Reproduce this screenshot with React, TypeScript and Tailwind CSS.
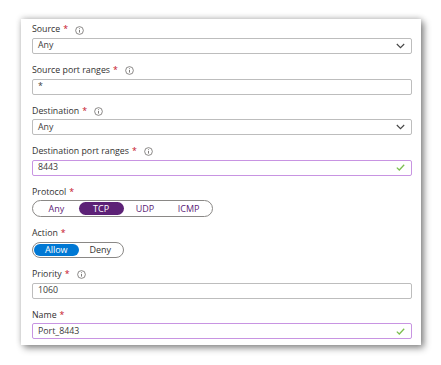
import React from "react";

const font = { fontFamily: '"Open Sans", "Noto Sans", sans-serif' };

const InfoIcon = () => (
  <svg width="9" height="9" viewBox="0 0 10 10" className="ml-[7px]">
    <circle cx="5" cy="5" r="4.3" fill="none" stroke="#605e5c" strokeWidth="0.8" />
    <line x1="5" y1="4.3" x2="5" y2="7.3" stroke="#605e5c" strokeWidth="0.9" />
    <circle cx="5" cy="2.9" r="0.55" fill="#605e5c" />
  </svg>
);

const Chevron = () => (
  <svg width="9" height="6" viewBox="0 0 9 6" className="mr-[2px]">
    <path d="M0.8 1 L4.5 4.7 L8.2 1" fill="none" stroke="#444" strokeWidth="1.1" />
  </svg>
);

const Check = () => (
  <svg width="9" height="7" viewBox="0 0 9 7" className="mr-[2px]">
    <path d="M0.8 3.6 L3.3 6 L8.2 0.8" fill="none" stroke="#7bbf4e" strokeWidth="1.3" />
  </svg>
);

const Label = ({ text, info }: { text: string; info?: boolean }) => (
  <div className="h-[12px] mb-[2px] flex items-center text-[8.8px] text-[#323130]">
    <span>{text}</span>
    <span className="text-[#c50f1f] ml-[3px]">*</span>
    {info && <InfoIcon />}
  </div>
);

const Input = ({
  value,
  kind,
}: {
  value: string;
  kind?: "select" | "valid";
}) => (
  <div
    className={`h-[16px] flex items-center justify-between pl-[5px] pr-[4px] rounded-[2px] border text-[8.8px] text-[#3b3a39] ${
      kind === "valid" ? "border-[#c894e2]" : "border-[#bdbdbd]"
    }`}
  >
    <span>{value}</span>
    {kind === "select" && <Chevron />}
    {kind === "valid" && <Check />}
  </div>
);

const App: React.FC = () => {
  return (
    <div className="w-[441px] h-[365px] bg-white pt-[19px] pl-[21px]" style={font}>
      <div className="w-[400px] h-[326px] bg-white shadow-[3px_3px_7px_rgba(0,0,0,0.45),0_-1px_6px_rgba(0,0,0,0.18)] pt-[5px] pl-[11px] pr-[9px] flex flex-col gap-[10.6px]">
        <div>
          <Label text="Source" info />
          <Input value="Any" kind="select" />
        </div>
        <div>
          <Label text="Source port ranges" info />
          <Input value="*" />
        </div>
        <div>
          <Label text="Destination" info />
          <Input value="Any" kind="select" />
        </div>
        <div>
          <Label text="Destination port ranges" info />
          <Input value="8443" kind="valid" />
        </div>
        <div>
          <Label text="Protocol" />
          <div className="w-[181px] h-[17px] rounded-full border border-[#8a8886] flex items-center px-[1px] text-[9px] text-[#5c2176]">
            <span className="w-[45px] text-center">Any</span>
            <span className="w-[45px] h-[13px] rounded-full bg-[#5c2176] text-white flex items-center justify-center">
              TCP
            </span>
            <span className="w-[43px] text-center">UDP</span>
            <span className="w-[45px] text-center">ICMP</span>
          </div>
        </div>
        <div>
          <Label text="Action" />
          <div className="w-[92px] h-[16px] rounded-full border border-[#8a8886] flex items-center px-[1px] text-[9px] text-[#323130]">
            <span className="w-[45px] h-[12px] rounded-full bg-[#0078d4] text-white flex items-center justify-center">
              Allow
            </span>
            <span className="w-[44px] text-center">Deny</span>
          </div>
        </div>
        <div>
          <Label text="Priority" info />
          <Input value="1060" />
        </div>
        <div>
          <Label text="Name" />
          <Input value="Port_8443" kind="valid" />
        </div>
      </div>
    </div>
  );
};

export default App;
